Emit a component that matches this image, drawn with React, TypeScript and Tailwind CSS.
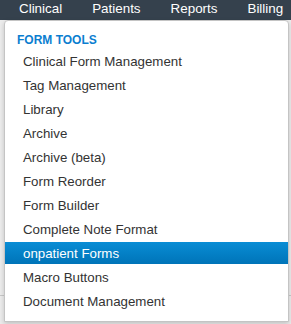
const NAV_ITEMS = ["Clinical", "Patients", "Reports", "Billing"];

const MENU_ITEMS = [
  "Clinical Form Management",
  "Tag Management",
  "Library",
  "Archive",
  "Archive (beta)",
  "Form Reorder",
  "Form Builder",
  "Complete Note Format",
  "onpatient Forms",
  "Macro Buttons",
  "Document Management",
];

const ACTIVE_ITEM = "onpatient Forms";

export default function App() {
  return (
    <div className="relative w-[291px] h-[324px] overflow-hidden bg-[#ececec] font-['Liberation_Sans',Arial,sans-serif]">
      <nav className="flex h-[20px] gap-[30px] bg-[#35414d] pl-[19px] text-[13.4px] leading-[18px] text-white">
        {NAV_ITEMS.map((label) => (
          <span key={label} className="whitespace-nowrap">
            {label}
          </span>
        ))}
      </nav>

      {/* page behind the menu */}
      <div className="h-[276px] border-b border-[#c8c8c8]" />

      {/* dropdown */}
      <div className="absolute left-[4px] top-[20px] h-[302px] w-[285px] rounded-t-[4px] border border-[#c4c4c4] bg-white shadow-[0_2px_5px_rgba(0,0,0,0.18)]">
        <div className="mt-[11px] pl-[12px] text-[12px] font-bold leading-[16px] text-[#0b7ed0]">
          FORM TOOLS
        </div>
        <ul className="mt-[2px] flex flex-col gap-[2px]">
          {MENU_ITEMS.map((item) => (
            <li
              key={item}
              className={`h-[22px] whitespace-nowrap pl-[18px] text-[13.3px] leading-[23px] ${
                item === ACTIVE_ITEM
                  ? "bg-linear-to-b from-[#0a8dd5] to-[#0074b8] text-white"
                  : "text-[#333333]"
              }`}
            >
              {item}
            </li>
          ))}
        </ul>
      </div>
    </div>
  );
}
